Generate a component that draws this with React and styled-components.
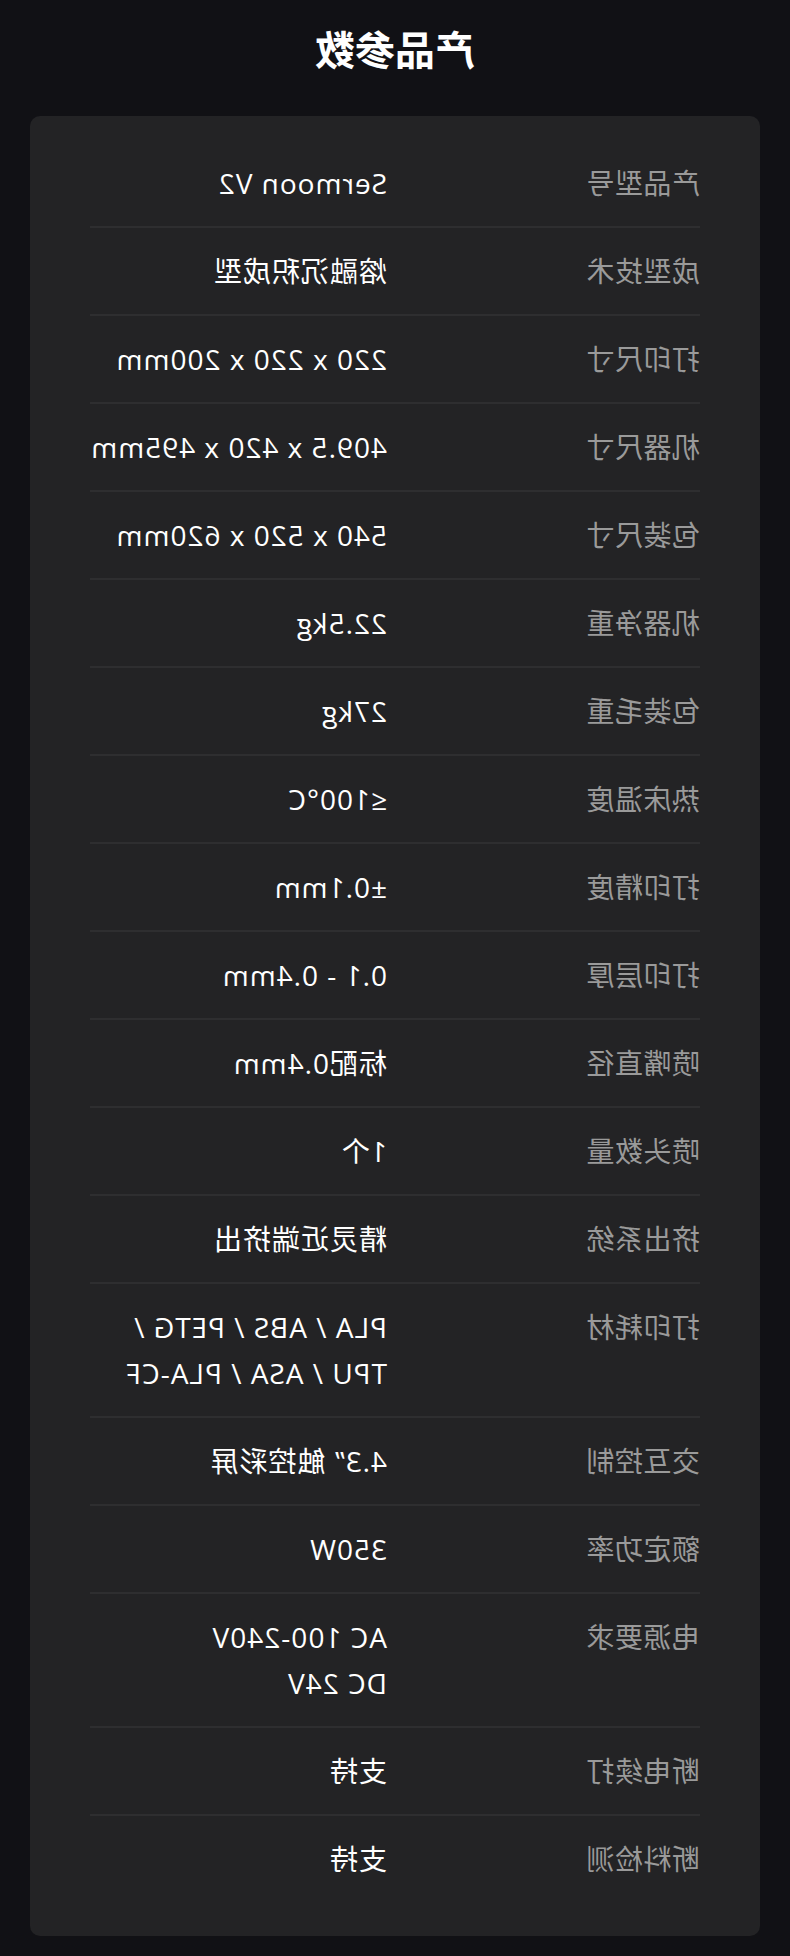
import styled, { createGlobalStyle } from "styled-components";

const GlobalStyle = createGlobalStyle`
  html, body {
    margin: 0;
    padding: 0;
    background: #111115;
  }
  body {
    font-family: "Open Sans", "DejaVu Sans", "Noto Sans CJK SC", sans-serif;
  }
`;

const specs = [
  { label: "产品型号", value: ["Sermoon V2"] },
  { label: "成型技术", value: ["熔融沉积成型"] },
  { label: "打印尺寸", value: ["220 x 220 x 200mm"] },
  { label: "机器尺寸", value: ["409.5 x 420 x 495mm"] },
  { label: "包装尺寸", value: ["540 x 520 x 620mm"] },
  { label: "机器净重", value: ["22.5kg"] },
  { label: "包装毛重", value: ["27kg"] },
  { label: "热床温度", value: ["≤100°C"] },
  { label: "打印精度", value: ["±0.1mm"] },
  { label: "打印层厚", value: ["0.1 - 0.4mm"] },
  { label: "喷嘴直径", value: ["标配0.4mm"] },
  { label: "喷头数量", value: ["1个"] },
  { label: "挤出系统", value: ["精灵近端挤出"] },
  { label: "打印耗材", value: ["PLA / ABS / PETG /", "TPU / ASA / PLA-CF"] },
  { label: "交互控制", value: ["4.3” 触控彩屏"] },
  { label: "额定功率", value: ["350W"] },
  { label: "电源要求", value: ["AC 100-240V", "DC 24V"] },
  { label: "断电续打", value: ["支持"] },
  { label: "断料检测", value: ["支持"] }
];

// the screenshot is mirrored left to right
const Page = styled.div`
  width: 790px;
  min-height: 1956px;
  box-sizing: border-box;
  padding: 20px 30px 20px;
  background: #111115;
  transform: scaleX(-1);
`;

const Title = styled.h1`
  margin: 0;
  font-family: "Noto Sans CJK SC", sans-serif;
  font-size: 40px;
  line-height: 56px;
  font-weight: 700;
  color: #ffffff;
  text-align: center;
`;

const Card = styled.div`
  margin-top: 40px;
  padding: 24px 60px 34px;
  background: #232325;
  border-radius: 10px;
`;

const Row = styled.div`
  display: grid;
  grid-template-columns: 313px 1fr;
  padding: 20px 0;
  border-bottom: 2px solid #2e2e30;
  font-size: 28px;
  line-height: 46px;
  letter-spacing: 1px;

  &:last-child {
    border-bottom: none;
  }
`;

const Label = styled.div`
  color: #9a9a9a;
  letter-spacing: 0.5px;
`;

const Value = styled.div`
  color: #ffffff;
  white-space: nowrap;
`;

const SpecRow = ({ label, value }) => (
  <Row>
    <Label>{label}</Label>
    <Value>
      {value.map((line) => (
        <div key={line}>{line}</div>
      ))}
    </Value>
  </Row>
);

const App = () => (
  <>
    <GlobalStyle />
    <Page>
      <Title>产品参数</Title>
      <Card>
        {specs.map((spec) => (
          <SpecRow key={spec.label} {...spec} />
        ))}
      </Card>
    </Page>
  </>
);

export default App;
